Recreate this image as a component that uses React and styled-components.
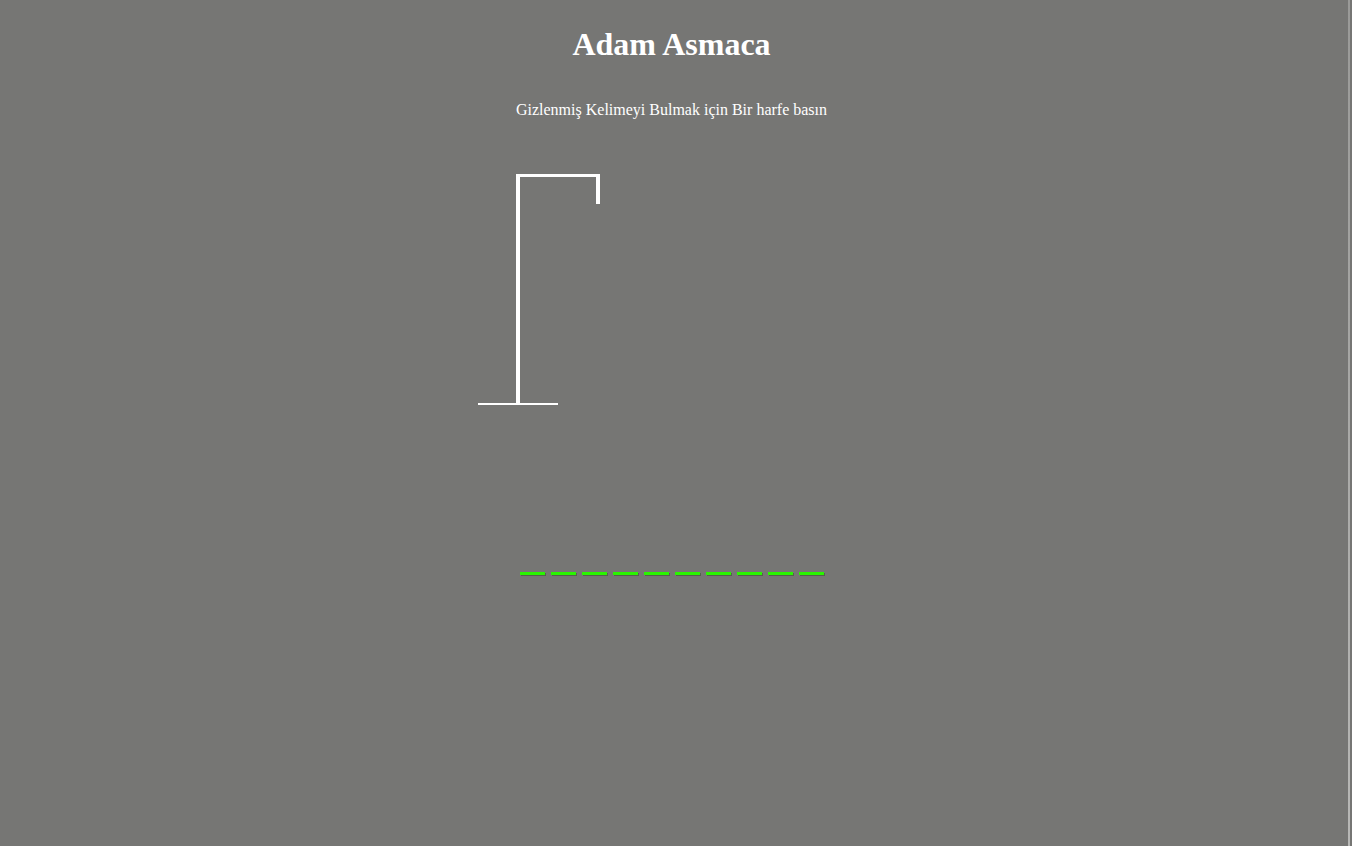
import styled, { createGlobalStyle } from "styled-components";

const GlobalStyle = createGlobalStyle`
  html, body {
    margin: 0;
    padding: 0;
    background-color: #767674;
  }
  body {
    font-family: "Liberation Serif", "Times New Roman", serif;
    color: #ffffff;
    min-height: 846px;
  }
`;

const Page = styled.div`
  width: 1343px;
  display: flex;
  flex-direction: column;
  align-items: center;
`;

const Title = styled.h1`
  margin: 24px 0 0;
  font-size: 32px;
  font-weight: 700;
  line-height: 40px;
`;

const Subtitle = styled.p`
  margin: 37px 0 0;
  font-size: 16px;
  line-height: 18px;
`;

const Board = styled.svg`
  display: block;
  margin-top: 55px;
`;

const Word = styled.div`
  display: flex;
  gap: 6px;
  margin-top: 163px;
`;

const Blank = styled.span`
  width: 25px;
  height: 3px;
  background-color: #2af500;
  box-shadow: 1px 1px 0 #55604c;
`;

const ScrollEdge = styled.div`
  position: fixed;
  top: 0;
  right: 2px;
  width: 2px;
  height: 846px;
  background: linear-gradient(#9a9a98, #b8b8b6);
`;

const letters = Array.from({ length: 10 }, (_, i) => i);

const App = () => {
  return (
    <>
      <GlobalStyle />
      <Page>
        <Title>Adam Asmaca</Title>
        <Subtitle>Gizlenmiş Kelimeyi Bulmak için Bir harfe basın</Subtitle>
        <Board width="400" height="235" viewBox="0 0 400 235">
          <g fill="#ffffff">
            <rect x="44" y="0" width="4" height="230" />
            <rect x="46" y="0" width="80" height="3" />
            <rect x="124" y="0" width="4" height="30" />
            <rect x="6" y="229" width="80" height="2" />
          </g>
        </Board>
        <Word>
          {letters.map((i) => (
            <Blank key={i} />
          ))}
        </Word>
      </Page>
      <ScrollEdge />
    </>
  );
};

export default App;
